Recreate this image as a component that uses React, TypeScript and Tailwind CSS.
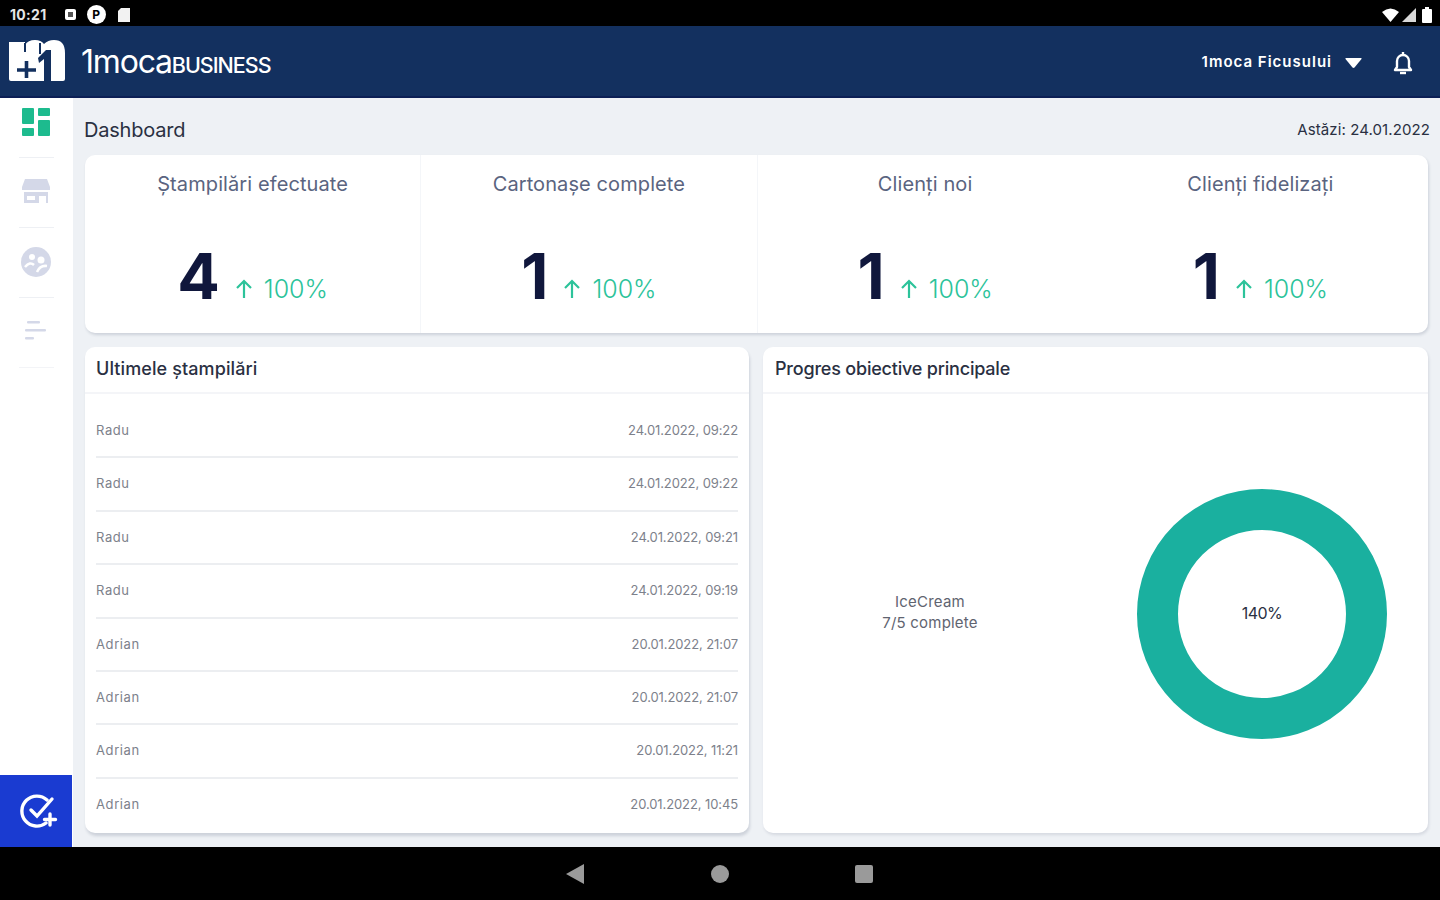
import React from "react";

const stats = [
  { title: "Ștampilări efectuate", value: "4" },
  { title: "Cartonașe complete", value: "1" },
  { title: "Clienți noi", value: "1" },
  { title: "Clienți fidelizați", value: "1" },
];

const rows = [
  ["Radu", "24.01.2022, 09:22"],
  ["Radu", "24.01.2022, 09:22"],
  ["Radu", "24.01.2022, 09:21"],
  ["Radu", "24.01.2022, 09:19"],
  ["Adrian", "20.01.2022, 21:07"],
  ["Adrian", "20.01.2022, 21:07"],
  ["Adrian", "20.01.2022, 11:21"],
  ["Adrian", "20.01.2022, 10:45"],
];

function Logo() {
  return (
    <svg width="58" height="44" viewBox="0 0 58 44">
      <path d="M1 3H17V6Q20 1 27 1Q33 1 36 5Q40 1 46 1Q57 1 57 14V40Q57 42 55 42H3Q1 42 1 40Z" fill="#fff" />
      <path d="M17 4v9M32 4v11" stroke="#13305f" strokeWidth="2" fill="none" />
      <path d="M9 31H28M18.500 22V39" stroke="#13305f" strokeWidth="3.600" fill="none" />
      <path d="M30 19L38 11H43V42H36V20L31 24Z" fill="#13305f" />
    </svg>
  );
}

function StatCard({ title, value, index }: { title: string; value: string; index: number }) {
  return (
    <div className={`flex-1 flex flex-col items-center ${index < 2 ? "border-r border-[#f4f6f9]" : ""}`}>
      <div className="mt-[16px] text-[20px] leading-[26px] tracking-[0.1px] text-[#5a6480]">{title}</div>
      <div className="mt-[44px] flex items-end">
        <span className="text-[63px] leading-[70px] font-bold text-[#10173c]">{value}</span>
        <span className="flex items-center pb-[7px] ml-[14px] text-[#2cc39a]">
          <svg width="20" height="22" viewBox="0 0 20 22" fill="none" stroke="currentColor" strokeWidth="2.200">
            <path d="M10 20V3M3 10l7-7 7 7" />
          </svg>
          <span className="ml-[10px] text-[25px] leading-[30px] font-light">100%</span>
        </span>
      </div>
    </div>
  );
}

export default function App() {
  return (
    <div className="w-[1440px] h-[900px] flex flex-col overflow-hidden bg-[#eef1f5] font-['Inter',sans-serif]">
      <div className="h-[26px] bg-black flex items-center justify-between pl-[10px] pr-[8px] pt-[3px] text-white">
        <div className="flex items-center">
          <span className="text-[14px] font-bold tracking-[0.3px] text-[#e6e6e6]">10:21</span>
          <span className="ml-[18px] w-[11px] h-[11px] rounded-[2px] bg-white flex items-center justify-center">
            <span className="w-[5px] h-[5px] bg-[#555]" />
          </span>
          <span className="ml-[11px] w-[19px] h-[19px] rounded-full bg-white flex items-center justify-center text-[12px] font-bold text-black leading-none">P</span>
          <svg className="ml-[11px]" width="14" height="16" viewBox="0 0 14 16"><path d="M4 1h9v14H1V4z" fill="#f2f2f2" /></svg>
        </div>
        <div className="flex items-center gap-[3px]">
          <svg width="17" height="14" viewBox="0 0 17 14"><path d="M0 4q8.500-7 17 0l-8.500 10z" fill="#fff" /></svg>
          <svg width="14" height="14" viewBox="0 0 14 14"><path d="M14 0v14H0z" fill="#fff" opacity="0.85" /></svg>
          <svg className="ml-[3px]" width="10" height="16" viewBox="0 0 10 16"><path d="M3 0h4v2h2a1 1 0 0 1 1 1v12a1 1 0 0 1-1 1H1a1 1 0 0 1-1-1V3a1 1 0 0 1 1-1h2z" fill="#fff" /></svg>
        </div>
      </div>

      <div className="h-[72px] bg-[#13305f] border-b-2 border-[#0c1f55] flex items-center pl-[8px] pr-[26px] text-white">
        <Logo />
        <div className="ml-[15px] pt-[2px] flex items-baseline leading-none">
          <span className="text-[32px] tracking-[-1.2px]">1moca</span>
          <span className="text-[21.500px] font-medium tracking-[-1px]">BUSINESS</span>
        </div>
        <div className="ml-auto pt-[3px] flex items-center">
          <span className="text-[15px] font-semibold tracking-[1px]">1moca Ficusului</span>
          <svg className="ml-[13px]" width="17" height="10" viewBox="0 0 17 10"><path d="M1 0h15q1 0 .5 1l-7 8.500q-1 .8-2 0l-7-8.500Q0 0 1 0z" fill="#fff" /></svg>
          <svg className="ml-[30px]" width="22" height="26" viewBox="0 0 22 26" fill="none" stroke="#fff" strokeWidth="2.400">
            <path d="M3 20h16l-2-3v-6a6 6 0 0 0-12 0v6z" strokeLinejoin="round" />
            <path d="M11 2v3" />
            <path d="M8 23h6" />
          </svg>
        </div>
      </div>

      <div className="flex-1 flex min-h-0">
        <aside className="w-[73px] bg-white flex flex-col items-stretch">
          <div className="h-[59px] flex justify-center pt-[10px] pr-[2px]">
            <svg width="28" height="28" viewBox="0 0 28 28" fill="#1dbb8e">
              <rect x="0" y="0" width="12" height="16" rx="1" />
              <rect x="16" y="0" width="12" height="8" rx="1" />
              <rect x="0" y="20" width="12" height="8" rx="1" />
              <rect x="16" y="12" width="12" height="16" rx="1" />
            </svg>
          </div>
          <div className="mx-[19px] h-px bg-[#eef0f4]" />
          <div className="h-[69px] flex items-center justify-center pr-[2px] pb-[3px]">
            <svg width="28" height="24" viewBox="0 0 28 24" fill="#d4d8e8">
              <path d="M3 0h22l3 8v3H0V8z" />
              <path d="M2 13h24v11h-2v-7h-7v7H2zM5 17v4h8v-4z" fillRule="evenodd" />
            </svg>
          </div>
          <div className="mx-[19px] h-px bg-[#eef0f4]" />
          <div className="h-[69px] flex items-center justify-center pr-[2px] pb-[2px]">
            <svg width="30" height="30" viewBox="0 0 30 30">
              <circle cx="15" cy="15" r="15" fill="#d4d8e8" />
              <circle cx="11" cy="10" r="3" fill="#fff" />
              <circle cx="20" cy="13" r="3.500" fill="#fff" />
              <path d="M4 20q5-6 9-2M16 25q3-7 10-6" stroke="#fff" strokeWidth="2.500" fill="none" />
            </svg>
          </div>
          <div className="mx-[19px] h-px bg-[#eef0f4]" />
          <div className="h-[69px] flex items-center justify-center pr-[2px] pb-[3px]">
            <svg width="22" height="20" viewBox="0 0 22 20" fill="#d4d8e8">
              <rect x="2" y="0" width="13" height="2.500" rx="1" />
              <rect x="0" y="8" width="21" height="2.500" rx="1" />
              <rect x="0" y="16" width="9" height="2.500" rx="1" />
            </svg>
          </div>
          <div className="mx-[19px] h-px bg-[#f3f4f7]" />
          <div className="mt-auto h-[72px] w-[72px] bg-[#1a3bd1] flex items-center justify-center">
            <svg className="ml-[8px]" width="40" height="36" viewBox="0 0 40 36" fill="none" stroke="#fff" strokeWidth="3.400" strokeLinecap="round">
              <path d="M27 7a15 15 0 1 0-1 23" />
              <path d="M11 17l6 6 15-17" />
              <path d="M30 21v11M24.500 26.500h11" />
            </svg>
          </div>
        </aside>

        <main className="flex-1 flex flex-col pl-[12px] pr-[12px] min-w-0">
          <div className="h-[57px] flex items-center justify-between pt-[7px] text-[#2a3042]">
            <span className="-ml-[1px] text-[20px] tracking-[-0.2px]">Dashboard</span>
            <span className="-mr-[2px] text-[15px] tracking-[0.1px]">Astăzi: 24.01.2022</span>
          </div>

          <section className="h-[178px] bg-white rounded-[10px] shadow-[1px_2px_3px_rgba(40,50,80,0.16)] flex">
            {stats.map((s, i) => (
              <StatCard key={s.title} title={s.title} value={s.value} index={i} />
            ))}
          </section>

          <div className="mt-[14px] h-[486px] flex gap-[14px]">
            <section className="w-[664px] shrink-0 bg-white rounded-[10px] shadow-[1px_3px_3px_rgba(40,50,80,0.16)] flex flex-col min-w-0">
              <h2 className="h-[47px] flex items-center px-[11px] pb-[2px] text-[18px] font-medium tracking-[0.1px] text-[#2a3042] border-b-2 border-[#f4f5f8]">
                Ultimele ștampilări
              </h2>
              <div className="px-[11px] pt-[11px] flex flex-col">
                {rows.map((r, i) => (
                  <div
                    key={i}
                    className={`h-[53.4px] shrink-0 flex items-center justify-between text-[13px] tracking-[-0.1px] text-[#7d818b] border-b-2 ${i < 7 ? "border-[#eceef1]" : "border-transparent"}`}
                  >
                    <span className="tracking-[0.6px]">{r[0]}</span>
                    <span>{r[1]}</span>
                  </div>
                ))}
              </div>
            </section>

            <section className="flex-1 bg-white rounded-[10px] shadow-[1px_2px_3px_rgba(40,50,80,0.12)] flex flex-col min-w-0">
              <h2 className="h-[47px] flex items-center pl-[12px] pr-[11px] pb-[2px] text-[18px] font-medium tracking-[-0.2px] text-[#2a3042] border-b-2 border-[#f4f5f8]">
                Progres obiective principale
              </h2>
              <div className="flex-1 flex items-center pl-[117px]">
                <div className="w-[100px] mb-[3px] text-center text-[15px] leading-[21px] tracking-[0.2px] text-[#5f6470] whitespace-nowrap flex flex-col items-center">
                  <span>IceCream</span>
                  <span>7/5 complete</span>
                </div>
                <div className="relative ml-[157px] w-[250px] h-[250px] mt-[1px]">
                  <svg width="250" height="250" viewBox="0 0 250 250">
                    <circle cx="125" cy="125" r="104.500" fill="none" stroke="#1ab09f" strokeWidth="41" />
                  </svg>
                  <span className="absolute inset-0 pb-[2px] flex items-center justify-center text-[16px] tracking-[-0.5px] text-[#2a3042]">140%</span>
                </div>
              </div>
            </section>
          </div>
        </main>
      </div>

      <div className="h-[53px] bg-black flex items-center justify-center pr-[2px]">
        <svg width="18" height="20" viewBox="0 0 18 20"><path d="M18 0v20L0 10z" fill="#9a9a9a" /></svg>
        <span className="ml-[127px] w-[18px] h-[18px] rounded-full bg-[#9a9a9a]" />
        <span className="ml-[126px] w-[18px] h-[18px] rounded-[2px] bg-[#9a9a9a]" />
      </div>
    </div>
  );
}
